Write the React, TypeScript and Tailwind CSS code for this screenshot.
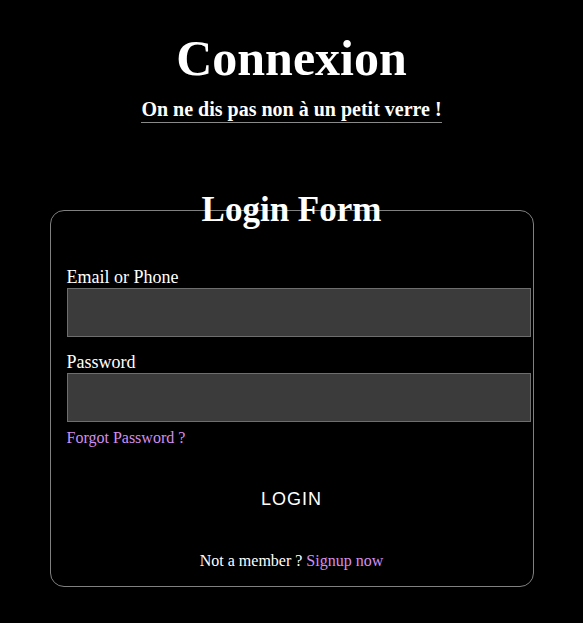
export default function App() {
  return (
    <div className="min-h-[623px] bg-black text-white font-['Liberation_Serif',serif] flex flex-col items-center">
      {/* Header */}
      <h1 className="mt-[30px] text-[50px] leading-[56px] font-bold">Connexion</h1>
      <p className="mt-[12px] text-[20px] leading-[23px] font-bold pb-px border-b border-[#8a8a8a]">
        On ne dis pas non à un petit verre !
      </p>

      {/* Login card */}
      <div className="mt-[87px] w-[484px] h-[377px] border border-[#808080] rounded-[14px] pl-[16px] flex flex-col">
        <h2 className="-mt-[21px] text-[35px] leading-[40px] font-bold text-center pr-[16px]">Login Form</h2>

        <label className="mt-[37px] text-[18px] leading-[21px]">Email or Phone</label>
        <input type="text" className="w-[464px] h-[49px] bg-[#3b3b3b] border border-[#6e6e6e] outline-none" />

        <label className="mt-[15px] text-[18px] leading-[21px]">Password</label>
        <input type="password" className="w-[464px] h-[49px] bg-[#3b3b3b] border border-[#6e6e6e] outline-none" />

        <a href="#" className="mt-[7px] text-[16px] leading-[18px] text-[#d48ef0] self-start">
          Forgot Password ?
        </a>

        <button className="mt-[42px] pr-[16px] self-stretch text-center font-['Liberation_Sans',sans-serif] text-[18px] leading-[21px] tracking-[1px] text-white bg-transparent">
          LOGIN
        </button>

        <p className="mt-[42px] pr-[16px] text-center text-[16px] leading-[18px]">
          Not a member ? <a href="#" className="text-[#d48ef0]">Signup now</a>
        </p>
      </div>
    </div>
  );
}
